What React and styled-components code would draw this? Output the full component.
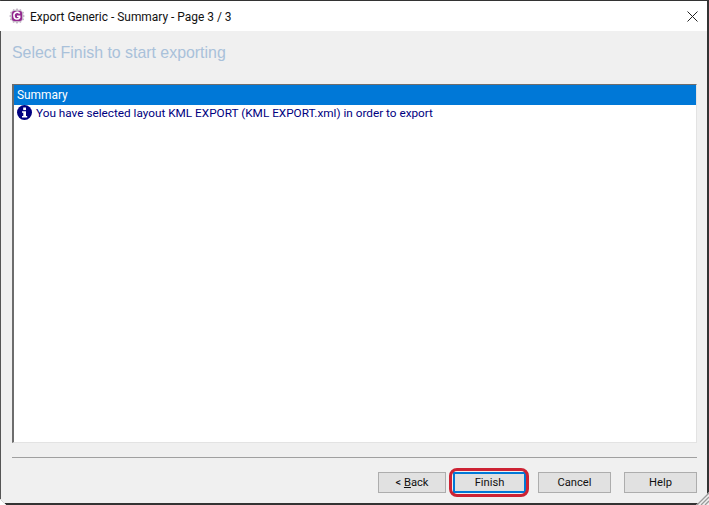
import styled, { createGlobalStyle } from 'styled-components'

const Global = createGlobalStyle`
  html, body {
    margin: 0;
    padding: 0;
    background: #fff;
  }
  body {
    font-family: Roboto, "Open Sans", sans-serif;
  }
`

const Window = styled.div`
  position: relative;
  box-sizing: border-box;
  width: 709px;
  height: 505px;
  display: flex;
  flex-direction: column;
  border-top: 1px solid #333;
  border-left: 1px solid #555;
  border-right: 2px solid #333;
  border-bottom: 2px solid #333;
  background: #f0f0f0;
`

const TitleBar = styled.div`
  height: 30px;
  flex: none;
  display: flex;
  align-items: center;
  background: #fff;
  margin-left: -1px;
  padding-left: 9px;
`

const AppIcon = styled.svg`
  width: 16px;
  height: 16px;
  margin-right: 5px;
`

const TitleText = styled.span`
  font-size: 11.95px;
  line-height: 16px;
  padding-top: 1px;
  color: #111;
  flex: 1;
`

const CloseIcon = styled.svg`
  width: 11px;
  height: 11px;
  margin-right: 9px;
`

const Body = styled.div`
  flex: 1;
  display: flex;
  flex-direction: column;
  padding: 0 10px 0 11px;
  min-height: 0;
`

const Heading = styled.h1`
  margin: 12px 0 22px;
  height: 19px;
  line-height: 19px;
  font-family: "Liberation Sans", Arial, sans-serif;
  font-size: 15.9px;
  font-weight: 400;
  color: #a9c1da;
`

const ListBox = styled.div`
  height: 359px;
  flex: none;
  box-sizing: border-box;
  background: #fff;
  border-top: 1px solid #6d6d6d;
  border-left: 2px solid #6d6d6d;
  border-right: 1px solid #e3e3e3;
  border-bottom: 1px solid #e3e3e3;
`

const HeaderRow = styled.div`
  height: 20px;
  line-height: 20px;
  background: #0078d7;
  color: #fff;
  font-size: 11.9px;
  padding-left: 3px;
`

const Row = styled.div`
  height: 15px;
  display: flex;
  align-items: center;
  color: #000080;
  font-size: 11.78px;
  padding-left: 3px;
`

const InfoIcon = styled.svg`
  width: 15px;
  height: 15px;
  margin-right: 4px;
  flex: none;
`

const Separator = styled.hr`
  flex: none;
  height: 0;
  margin: 14px 0 0;
  border: 0;
  border-top: 1px solid #a0a0a0;
`

const Footer = styled.div`
  flex: none;
  display: flex;
  justify-content: flex-end;
  margin-top: 14px;
`

const Button = styled.button`
  position: relative;
  box-sizing: border-box;
  width: ${({ $w }) => $w}px;
  height: 21px;
  margin-left: ${({ $gap }) => $gap}px;
  padding: 0;
  background: #e1e1e1;
  border: 1px solid ${({ $active }) => ($active ? '#0078d7' : '#adadad')};
  box-shadow: ${({ $active }) => ($active ? 'inset 0 0 0 1px #0078d7' : 'none')};
  font-family: inherit;
  font-size: 11.2px;
  color: #111;
`

const Highlight = styled.span`
  position: absolute;
  left: -5px;
  right: -4px;
  top: -5px;
  bottom: -5px;
  border: 3px solid #cd2334;
  border-radius: 8px;
`

const Grip = styled.svg`
  position: absolute;
  right: -2px;
  bottom: -2px;
  width: 13px;
  height: 13px;
`

const CornerCut = styled.svg`
  position: absolute;
  left: -1px;
  bottom: -2px;
  width: 6px;
  height: 6px;
`

export default function App() {
  return (
    <>
      <Global />
      <Window>
        <TitleBar>
          <AppIcon viewBox="0 0 16 16">
            <path
              d="M8 0l1.600 2 2.400-1 .6 2.500 2.500.6-1 2.400 2 1.500-2 1.600 1 2.400-2.500.6-.6 2.500-2.400-1L8 16l-1.600-2-2.400 1-.6-2.500-2.500-.6 1-2.400L0 8l2-1.500-1-2.400 2.500-.6.6-2.500 2.400 1z"
              fill="#c4b6c6"
            />
            <rect x="3" y="3" width="10" height="10" rx="2" fill="#93278f" />
            <path d="M10.700 5.500A3.200 3.200 0 0 0 5 8a3 3 0 0 0 5.600 1.500V8.300H8" fill="none" stroke="#fff" strokeWidth="1.600" />
          </AppIcon>
          <TitleText>Export Generic - Summary - Page 3 / 3</TitleText>
          <CloseIcon viewBox="0 0 11 11">
            <path d="M.5.500l10 10M10.500.500l-10 10" stroke="#222" strokeWidth="1" fill="none" />
          </CloseIcon>
        </TitleBar>
        <Body>
          <Heading>Select Finish to start exporting</Heading>
          <ListBox>
            <HeaderRow>Summary</HeaderRow>
            <Row>
              <InfoIcon viewBox="0 0 15 15">
                <circle cx="7.500" cy="7.500" r="7.500" fill="#000080" />
                <rect x="6.200" y="2.500" width="2.800" height="2.600" fill="#fff" />
                <path d="M5 6.300h4v4.700h1.200v1.500H5V11h1.300V7.800H5z" fill="#fff" />
              </InfoIcon>
              You have selected layout KML EXPORT (KML EXPORT.xml) in order to export
            </Row>
          </ListBox>
          <Separator />
          <Footer>
            <Button $w={68}>
              &lt; <u>B</u>ack
            </Button>
            <Button $w={73} $gap={7} $active>
              Finish
              <Highlight />
            </Button>
            <Button $w={73} $gap={12}>Cancel</Button>
            <Button $w={73} $gap={13}>Help</Button>
          </Footer>
        </Body>
        <CornerCut viewBox="0 0 6 6">
          <path d="M0 0L6 6H0z" fill="#fff" />
          <path d="M0 0L6 6" stroke="#d8d8d8" strokeWidth="1" fill="none" />
        </CornerCut>
        <Grip viewBox="0 0 13 13">
          <path d="M13 0V13H0z" fill="#f0f0f0" />
          <path d="M13 1L1 13M13 5L5 13M13 9L9 13" stroke="#9a9a9a" strokeWidth="1.300" fill="none" />
        </Grip>
      </Window>
    </>
  )
}
